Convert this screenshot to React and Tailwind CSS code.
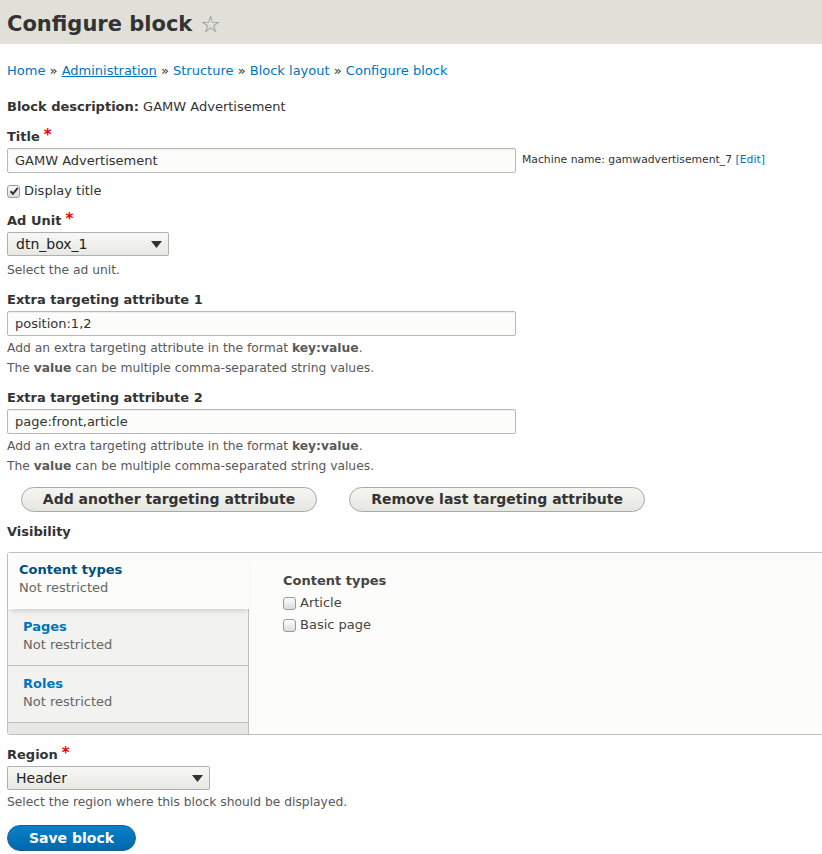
import React from "react";

const Req = () => <span className="text-[#e00] ml-[4px] text-[15px] leading-[14px] self-start">*</span>;

function Caret() {
  return (
    <svg width="11" height="7" viewBox="0 0 11 7" className="shrink-0">
      <path d="M0 0 H11 L5.5 7 Z" fill="#333" />
    </svg>
  );
}

function Checkbox({ checked }) {
  return (
    <span className="inline-flex w-[13px] h-[13px] rounded-[3px] border border-[#9a9a9a] bg-gradient-to-b from-[#fdfdfd] to-[#dcdcdc] items-center justify-center shrink-0">
      {checked && (
        <svg width="10" height="10" viewBox="0 0 10 10">
          <path d="M1.5 5.2 L4 7.8 L8.8 1.8" stroke="#333" strokeWidth="2" fill="none" />
        </svg>
      )}
    </span>
  );
}

function Input({ value, w = "w-[509px]" }) {
  return (
    <div className={`${w} h-[25px] border border-[#b8b8b8] rounded-[2px] bg-[#fcfcfa] px-[7px] flex items-center text-[13px] text-[#333] shadow-[inset_0_1px_1px_rgba(0,0,0,0.06)]`}>
      {value}
    </div>
  );
}

function Select({ value, w }) {
  return (
    <div className={`${w} h-[24px] border border-[#b0b0b0] rounded-[2px] bg-gradient-to-b from-[#f7f7f5] to-[#e8e8e3] pl-[8px] pr-[6px] flex items-center justify-between text-[14px] text-[#222]`}>
      <span>{value}</span>
      <Caret />
    </div>
  );
}

function Desc({ children }) {
  return <div className="text-[12.3px] text-[#595959] leading-[20px]">{children}</div>;
}

function Label({ children, req }) {
  return (
    <div className="h-[18px] flex items-center text-[13px] font-bold text-[#333] leading-[18px] mb-[2px]">
      <span>{children}</span>
      {req && <Req />}
    </div>
  );
}

function Btn({ children }) {
  return (
    <div className="h-[25px] rounded-full border border-[#a8a8a8] bg-gradient-to-b from-[#f5f5f2] to-[#e6e6e1] flex items-center justify-center text-[14px] font-bold text-[#333] px-[4px] whitespace-nowrap">
      {children}
    </div>
  );
}

export default function App() {
  return (
    <div className="w-[822px] h-[854px] overflow-hidden bg-white text-[#333]" style={{ fontFamily: '"DejaVu Sans", sans-serif' }}>
      <div className="h-[44px] bg-[#e0e0d8] flex items-center px-[7px] pt-[4px]">
        <h1 className="text-[21px] font-bold text-[#333] leading-none">Configure block</h1>
        <span className="ml-[8px] text-[23px] text-[#8a8a8a] leading-none">☆</span>
      </div>

      <div className="px-[7px]">
        <div className="mt-[18px] text-[13px] text-[#0074bd] leading-[18px]">
          Home <span className="text-[#333]">»</span> <span className="underline">Administration</span>{" "}
          <span className="text-[#333]">»</span> Structure <span className="text-[#333]">»</span> Block layout{" "}
          <span className="text-[#333]">»</span> Configure block
        </div>

        <div className="mt-[18px] text-[13px] leading-[18px]">
          <span className="font-bold">Block description:</span> GAMW Advertisement
        </div>

        <div className="mt-[12px]">
          <Label req>Title</Label>
          <div className="flex items-center">
            <Input value="GAMW Advertisement" />
            <span className="ml-[6px] text-[10.8px] text-[#333]">
              Machine name: gamwadvertisement_7 <span className="text-[#0074bd]">[Edit]</span>
            </span>
          </div>
          <div className="mt-[9px] flex items-center gap-[4px] text-[13px] leading-[18px]">
            <Checkbox checked />
            <span>Display title</span>
          </div>
        </div>

        <div className="mt-[12px]">
          <Label req>Ad Unit</Label>
          <Select value="dtn_box_1" w="w-[162px]" />
          <div className="mt-[4px]"><Desc>Select the ad unit.</Desc></div>
        </div>

        <div className="mt-[11px]">
          <Label>Extra targeting attribute 1</Label>
          <Input value="position:1,2" />
          <div className="mt-[2px]">
            <Desc>Add an extra targeting attribute in the format <b>key:value</b>.</Desc>
            <Desc>The <b>value</b> can be multiple comma-separated string values.</Desc>
          </div>
        </div>

        <div className="mt-[11px]">
          <Label>Extra targeting attribute 2</Label>
          <Input value="page:front,article" />
          <div className="mt-[2px]">
            <Desc>Add an extra targeting attribute in the format <b>key:value</b>.</Desc>
            <Desc>The <b>value</b> can be multiple comma-separated string values.</Desc>
          </div>
        </div>

        <div className="mt-[11px] flex pl-[14px] gap-[32px]">
          <div className="w-[296px]"><Btn>Add another targeting attribute</Btn></div>
          <div className="w-[296px]"><Btn>Remove last targeting attribute</Btn></div>
        </div>

        <div className="mt-[11px] text-[13px] font-bold leading-[18px]">Visibility</div>

        <div className="mt-[11px] w-[830px] h-[183px] border border-[#c0c0c0] rounded-[3px] bg-[#fcfcfa] flex">
          <div className="w-[241px] shrink-0 flex flex-col">
            <div className="h-[56px] bg-[#fcfcfa] pl-[11px] pt-[8px] text-[13px] leading-[18px] relative z-10 shadow-[0_4px_5px_-2px_rgba(0,0,0,0.15)]">
              <div className="font-bold text-[#004f80]">Content types</div>
              <div className="text-[#666]">Not restricted</div>
            </div>
            <div className="h-[57px] bg-[#f2f2f0] border-r border-b border-[#bfbfbf] pl-[15px] pt-[9px] text-[13px] leading-[18px]">
              <div className="font-bold text-[#0074bd]">Pages</div>
              <div className="text-[#666]">Not restricted</div>
            </div>
            <div className="h-[57px] bg-[#f2f2f0] border-r border-b border-[#bfbfbf] pl-[15px] pt-[9px] text-[13px] leading-[18px]">
              <div className="font-bold text-[#0074bd]">Roles</div>
              <div className="text-[#666]">Not restricted</div>
            </div>
            <div className="flex-1 bg-[#e6e6e2] border-r border-[#bfbfbf]"></div>
          </div>
          <div className="flex-1 pl-[34px] pt-[19px] text-[13px] leading-[22px]">
            <div className="font-bold text-[#444] leading-[18px] mb-[2px]">Content types</div>
            <div className="flex items-center gap-[4px] text-[#444]"><Checkbox /><span>Article</span></div>
            <div className="flex items-center gap-[4px] text-[#444]"><Checkbox /><span>Basic page</span></div>
          </div>
        </div>

        <div className="mt-[11px]">
          <Label req>Region</Label>
          <Select value="Header" w="w-[203px]" />
          <div className="mt-[2px]"><Desc>Select the region where this block should be displayed.</Desc></div>
        </div>

        <div className="mt-[13px] w-[129px] h-[26px] rounded-full bg-gradient-to-b from-[#0a80c8] to-[#0069ad] border border-[#1e5c90] flex items-center justify-center text-white text-[14px] font-bold">
          Save block
        </div>
      </div>
    </div>
  );
}
